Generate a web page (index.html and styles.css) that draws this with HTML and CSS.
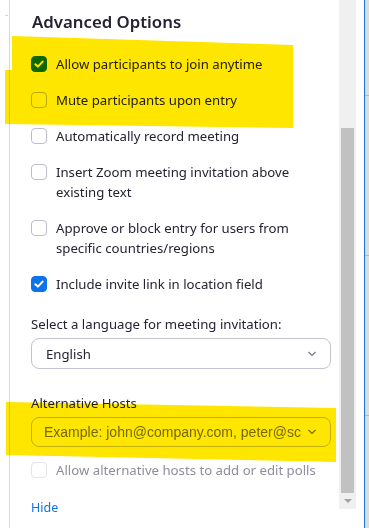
FILE: index.html
```html
<!DOCTYPE html>
<html>
  <head>
    <meta charset="utf-8">
    <title>Advanced Options</title>
    <link rel="stylesheet" href="styles.css">
  </head>
  <body>
  <div id="window">
    <div class="gutter"><span class="tick"></span></div>
    <div id="panel">
      <h2>Advanced Options</h2>
      <ul class="options">
        <li class="option checked">
          <span class="box"><svg viewBox="0 0 16 16" width="16" height="16"><path d="M4.3 8.2 L6.9 10.6 L11.6 5.6" /></svg></span>
          <span class="text">Allow participants to join anytime</span>
        </li>
        <li class="option">
          <span class="box"></span>
          <span class="text">Mute participants upon entry</span>
        </li>
        <li class="option">
          <span class="box"></span>
          <span class="text">Automatically record meeting</span>
        </li>
        <li class="option">
          <span class="box"></span>
          <span class="text">Insert Zoom meeting invitation above existing text</span>
        </li>
        <li class="option">
          <span class="box"></span>
          <span class="text">Approve or block entry for users from specific countries/regions</span>
        </li>
        <li class="option checked">
          <span class="box"><svg viewBox="0 0 16 16" width="16" height="16"><path d="M4.3 8.2 L6.9 10.6 L11.6 5.6" /></svg></span>
          <span class="text">Include invite link in location field</span>
        </li>
      </ul>

      <div class="field-label">Select a language for meeting invitation:</div>
      <div class="select">
        <span class="value">English</span>
        <svg class="chevron" viewBox="0 0 10 6" width="10" height="6"><path d="M1.5 1 L5 4.5 L8.5 1" /></svg>
      </div>

      <div class="field-label hosts-label">Alternative Hosts</div>
      <div class="select hosts">
        <span class="placeholder">Example: john@company.com, peter@sc</span>
        <svg class="chevron" viewBox="0 0 10 6" width="10" height="6"><path d="M1.5 1 L5 4.5 L8.5 1" /></svg>
      </div>

      <div class="option disabled">
        <span class="box"></span>
        <span class="text">Allow alternative hosts to add or edit polls</span>
      </div>

      <a class="hide" href="#">Hide</a>
    </div>
    <div class="scrollbar">
      <div class="thumb"></div>
      <div class="arrow"></div>
    </div>
    <div class="edge"></div>
    <div class="divider"></div>
    <div class="side">
      <span class="mark first"></span>
      <span class="mark"></span>
      <span class="mark"></span>
    </div>

    <!-- highlighter marks drawn over the screenshot -->
    <svg class="marker" viewBox="0 0 369 528" width="369" height="528">
      <polygon points="12,36 293,45 293,128 150,126 5,124 5,70 12,70" />
      <polygon points="6,402 336,408 336,462 150,458 6,455" />
    </svg>
  </div>
  </body>
</html>
```

FILE: styles.css
```css
html, body { margin: 0; background: #fff; }
body { font-family: "Noto Sans", sans-serif; color: #232333; }

#window { position: relative; display: flex; width: 369px; height: 528px; overflow: hidden; }

.gutter { width: 9px; border-right: 1px solid #dadada; padding-top: 15px; }
.tick { display: block; margin-left: 5px; width: 3px; height: 1px; background: #d4d4d4; }

#panel { width: 300px; padding: 9px 8px 0 21px; }
h2 { margin: 0 0 19px 1px; font-size: 16.8px; line-height: 26px; font-weight: 600; }

.options { list-style: none; margin: 0; padding: 0; }
.option { display: flex; gap: 9px; margin-bottom: 16px; font-size: 13.2px; line-height: 20px; }
.options .option:last-child { margin-bottom: 0; }
.box { flex: none; width: 16px; height: 16px; margin-top: 2px; box-sizing: border-box; border: 1px solid #bdbccc; border-radius: 4px; background: #fff; }
.box svg { display: block; margin: -1px; fill: none; stroke: #fff; stroke-width: 2; stroke-linecap: round; stroke-linejoin: round; }
.checked .box { background: #0e72ed; border-color: #0e72ed; }

.field-label { margin-top: 20px; font-size: 13.2px; line-height: 20px; }
.hosts-label { margin-top: 24px; }

.select { display: flex; align-items: center; justify-content: space-between; margin-top: 4px; height: 31px; box-sizing: border-box; border: 1px solid #c3c2d2; border-radius: 8px; padding: 0 13px 0 14px; font-size: 13.2px; }
.chevron { flex: none; fill: none; stroke: #747487; stroke-width: 1.2; }
.select.hosts { height: 30px; padding-left: 12px; }
.placeholder { white-space: nowrap; font-family: "Liberation Sans", Arial, sans-serif; font-size: 14px; color: #747487; }

.disabled { margin-top: 13px; margin-bottom: 0; color: #8e8e9c; }
.disabled .box { border-color: #e3e3ea; }

.hide { display: block; margin-top: 18px; font-size: 12.5px; line-height: 20px; color: #0e72ed; text-decoration: none; }

.scrollbar { width: 17px; height: 509px; padding-top: 128px; box-sizing: border-box; background: #f0f0f0; }
.thumb { margin: 0 2px; height: 365px; background: #c1c1c1; }
.arrow { width: 0; height: 0; margin: 6px auto 0; border-top: 4px solid #a3a3a3; border-left: 4px solid transparent; border-right: 4px solid transparent; }

.edge { width: 8px; }
.divider { width: 1px; background: #1b74c9; }
.side { width: 4px; background: #dcdcdc; }
.mark { display: block; height: 1px; margin-top: 159px; background: #b4b4b4; }
.mark.first { margin-top: 95px; }

.marker { position: absolute; left: 0; top: 0; pointer-events: none; mix-blend-mode: multiply; }
.marker polygon { fill: #ffe600; }
```
